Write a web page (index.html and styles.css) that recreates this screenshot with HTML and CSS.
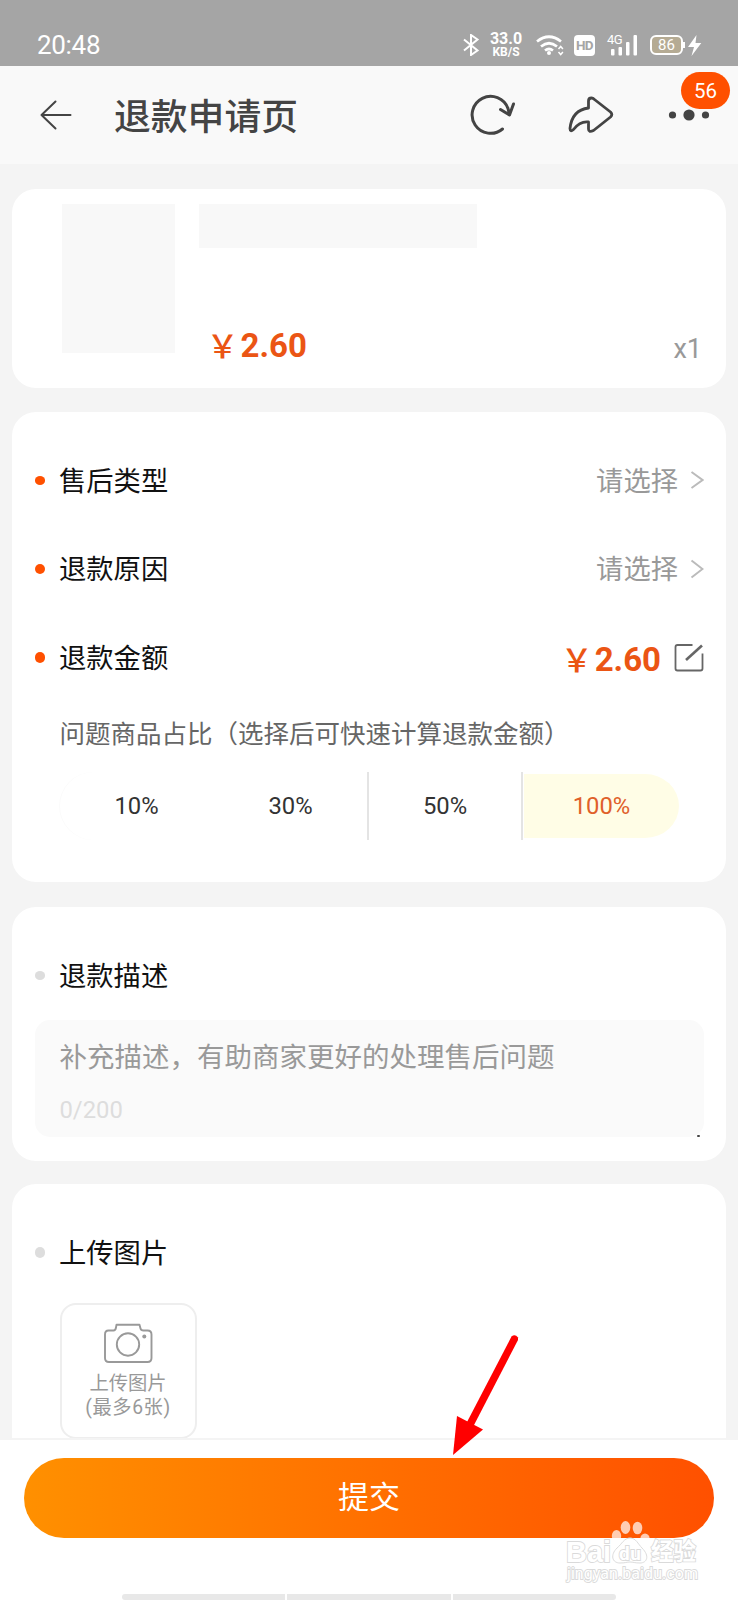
FILE: index.html
```html
<!DOCTYPE html>
<html lang="zh-CN">
<head>
<meta charset="utf-8">
<title>退款申请页</title>
<link rel="stylesheet" href="styles.css">
</head>
<body>
<div class="screen">
  <div class="status">
    <span class="clock">20:48</span>
    <div class="status-icons">
      <svg class="bt" width="17" height="22" viewBox="463 34 17 22" fill="none" stroke="#fff" stroke-width="2"><path d="M464 39.500l13.500 11-6.500 4.500v-20l6.500 4.500L464 50.500"/></svg>
      <div class="speed"><b>33.0</b><i>KB/S</i></div>
      <svg class="wifi" width="28" height="22" viewBox="536 34 28 22" fill="none" stroke="#fff" stroke-width="2.700"><path d="M537 41.500q12-9.500 24 0M541 46.500q8-6.500 16 0M545 50.500q4-3 8 0"/><circle cx="549" cy="53" r="2" fill="#fff" stroke="none"/><path d="M558.500 49l2.200-2.500 2.200 2.500M558.500 52l2.200 2.500 2.200-2.500" stroke-width="1.500"/></svg>
      <span class="hd">HD</span>
      <div class="signal"><span>4G</span><svg width="31" height="22" viewBox="607 34 31 22" fill="#fff"><rect x="611" y="49" width="3.500" height="6.500" rx="1"/><rect x="618.500" y="47" width="3.500" height="8.500" rx="1"/><rect x="626" y="42" width="3.500" height="13.500" rx="1"/><rect x="633.500" y="35" width="3.500" height="20.500" rx="1"/></svg></div>
      <span class="battery">86</span>
      <svg class="bolt" width="14" height="22" viewBox="688 34 14 22" fill="#fff"><path d="M696.500 35l-8.500 12h6l-2.500 9 9.800-13h-5.800z"/></svg>
    </div>
  </div>

  <header class="nav">
    <svg class="back" width="32" height="30" viewBox="40 100 32 30" fill="none" stroke="#444" stroke-width="2" stroke-linecap="round" stroke-linejoin="round"><path d="M70.500 115H41.500M55.500 101.500L41.500 115l14 13.500"/></svg>
    <h1>退款申请页</h1>
    <svg class="reload" width="46" height="44" viewBox="469 93 46 44" fill="none" stroke="#444" stroke-width="3" stroke-linecap="round" stroke-linejoin="round"><path d="M502.500 129A18.500 18.500 0 1 1 508 108.500L509.500 114.500M500.500 109.500L509.500 115l4-11"/></svg>
    <svg class="share" width="46" height="38" viewBox="568 96 46 38" fill="none" stroke="#444" stroke-width="2.800" stroke-linejoin="round" stroke-linecap="round"><path d="M588.500 108V101Q588.500 98 591.500 98Q593 98 594.500 99.500L610.500 112Q613 114.500 610.500 117L593.500 130.500Q588.500 133 588.500 129V122Q580 121 573.500 129.500Q570 132.500 570 128.500Q572 110 588.500 108Z"/></svg>
    <div class="more">
      <svg width="42" height="12" viewBox="668 109 42 12" fill="#444"><circle cx="672.500" cy="115" r="3.600"/><circle cx="689" cy="115" r="5.600"/><circle cx="705.500" cy="115" r="3.600"/></svg>
      <span class="badge">56</span>
    </div>
  </header>

  <main class="content">
    <section class="card goods">
      <div class="thumb"></div>
      <div class="goods-info">
        <div class="goods-name"></div>
        <div class="price"><span class="yen">￥</span>2.60</div>
      </div>
      <span class="qty">x1</span>
    </section>

    <section class="card form">
      <div class="row"><i class="dot flat"></i><span class="label">售后类型</span><span class="pick">请选择</span><svg class="chev" width="14" height="20" viewBox="0 0 14 20"><path d="M1.500 2l11 8-11 8"/></svg></div>
      <div class="row"><i class="dot"></i><span class="label">退款原因</span><span class="pick">请选择</span><svg class="chev" width="14" height="20" viewBox="0 0 14 20"><path d="M1.500 1.500L12.500 10l-11 8.500"/></svg></div>
      <div class="row"><i class="dot"></i><span class="label">退款金额</span><div class="price"><span class="yen">￥</span>2.60</div><svg class="edit" width="30" height="30" viewBox="674.500 643 30 30"><path d="M693 645H678Q676 645 676 647V668.500Q676 670.500 678 670.500H701Q703 670.500 703 668.500V653.500"/><path d="M686.500 660L702.500 645.500" stroke-width="2.600"/></svg></div>
      <p class="hint">问题商品占比（选择后可快速计算退款金额）</p>
      <div class="ratios"><span>10%</span><span>30%</span><span class="line">50%</span><span class="line on">100%</span></div>
    </section>

    <section class="card desc">
      <div class="row"><i class="dot gray flat"></i><span class="label">退款描述</span></div>
      <div class="area"><p>补充描述，有助商家更好的处理售后问题</p><small>0/200</small><i class="grip"></i></div>
    </section>

    <section class="card upload">
      <div class="row"><i class="dot gray"></i><span class="label">上传图片</span></div>
      <div class="uploader">
        <svg width="50" height="41" viewBox="102.500 1323.500 50 41" fill="none" stroke="#999" stroke-width="1.900" stroke-linejoin="round"><path d="M108 1331H113Q115 1331 115.500 1328L116 1325.200H139L140 1329Q140.500 1331 143 1331H147Q151 1331 151 1335V1358.500Q151 1362.500 147 1362.500H108.500Q104.500 1362.500 104.500 1358.500V1335Q104.500 1331 108 1331Z"/><circle cx="127.500" cy="1345" r="11.200"/><circle cx="143.800" cy="1337" r="2" fill="#999" stroke="none"/></svg>
        <span>上传图片</span>
        <span class="limit">(最多6张)</span>
      </div>
    </section>
  </main>

  <footer class="bottom">
    <button class="submit">提交</button>
    <div class="gesture"><i></i><i></i><i></i></div>
  </footer>

  <svg class="pointer" width="70" height="124" viewBox="450 1334 70 124"><path d="M511.500 1336.500Q515 1333.500 518 1337.500L518 1340L473.500 1426L466.500 1423Z" fill="#f00"/><path d="M453 1455L457 1416L483 1429.500Z" fill="#f00"/></svg>

  <svg class="watermark" width="136" height="68" viewBox="564 1519 136 68">
    <g fill="#fff" fill-opacity=".7"><ellipse cx="616.500" cy="1536" rx="4.700" ry="6"/><ellipse cx="625.500" cy="1527.500" rx="4.800" ry="6.500"/><ellipse cx="637.500" cy="1528" rx="4.800" ry="6.300"/><ellipse cx="645" cy="1539" rx="4.700" ry="5.500"/></g>
    <path d="M630 1538c6 0 8 6 12 10 8 8 5 15-2 15-5 0-7-1-10-1s-5 1-10 1c-8 0-10-8-3-15 5-4 7-10 13-10z" fill="#fff" fill-opacity=".85" stroke="#dcdcdc"/>
    <g class="wm-text">
      <text class="wm-brand" x="566" y="1562" textLength="45" lengthAdjust="spacingAndGlyphs">Bai</text>
      <text class="wm-du" x="619" y="1560" textLength="22">du</text>
      <text class="wm-cn" x="651" y="1560" textLength="45" lengthAdjust="spacingAndGlyphs">经验</text>
      <text class="wm-url" x="567" y="1579" textLength="131">jingyan.baidu.com</text>
    </g>
  </svg>
</div>
</body>
</html>
```
FILE: styles.css
```css
* { box-sizing: border-box; }

body {
  margin: 0;
  font-family: Roboto, "Noto Sans CJK SC", sans-serif;
  color: #111;
}

.screen {
  position: relative;
  width: 738px;
  height: 1600px;
  display: flex;
  flex-direction: column;
  overflow: hidden;
  background: #f4f4f4;
}

/* status bar */
.status {
  flex: none;
  height: 66px;
  padding: 24px 36px 0 37px;
  display: flex;
  justify-content: space-between;
  align-items: center;
  background: #a5a5a5;
  color: #fff;
}
.clock { font-size: 26px; letter-spacing: -0.3px; }
.status-icons { display: flex; align-items: center; }
.status-icons svg { display: block; flex: none; }
.speed {
  width: 34px;
  margin-left: 9px;
  display: flex;
  flex-direction: column;
  align-items: center;
}
.speed b { font-size: 16px; line-height: 14px; font-weight: 700; }
.speed i { font-size: 12px; line-height: 12px; font-style: normal; font-weight: 700; }
.wifi { margin-left: 13px; }
.hd {
  width: 21px;
  height: 21px;
  margin-left: 10px;
  border-radius: 4px;
  background: #fff;
  color: #a5a5a5;
  font-size: 13.500px;
  line-height: 21px;
  font-weight: 700;
  text-align: center;
  letter-spacing: -0.600px;
}
.signal { position: relative; margin-left: 12px; }
.signal span { position: absolute; left: 0; top: -1px; font-size: 13px; line-height: 13px; letter-spacing: -0.500px; }
.battery {
  position: relative;
  width: 33px;
  height: 20px;
  margin-left: 12px;
  border: 2px solid #fff;
  border-radius: 6px;
  background: #b5ab94;
  font-size: 15px;
  line-height: 16px;
  text-align: center;
}
.battery::after {
  content: "";
  position: absolute;
  right: -4px;
  top: 5px;
  width: 2px;
  height: 6px;
  background: #fff;
}
.bolt { margin-left: 5px; }

/* navigation */
.nav {
  flex: none;
  height: 98px;
  padding: 0 28px 0 40px;
  display: flex;
  align-items: center;
  background: #f9f9f9;
}
.nav h1 {
  flex: 1;
  margin: 0 0 0 42px;
  padding-top: 6px;
  font-size: 36.800px;
  line-height: 50px;
  font-weight: 500;
  color: #444;
}
.share { margin-left: 53px; }
.more { position: relative; display: flex; margin-left: 54px; }
.badge {
  position: absolute;
  left: 13px;
  top: -37px;
  width: 49px;
  height: 37px;
  border-radius: 19px;
  background: #ff5000;
  color: #fff;
  font-size: 20.500px;
  line-height: 38px;
  text-align: center;
}

/* cards */
.content {
  flex: 1;
  min-height: 0;
  padding: 25px 12px 0;
  overflow: hidden;
}
.card { background: #fff; border-radius: 24px; }
.goods {
  height: 199px;
  padding: 14.500px 24px 0 50px;
  display: flex;
}
.thumb { width: 112.500px; height: 149px; background: #f8f8f8; }
.goods-info { margin-left: 24px; flex: 1; }
.goods-name { width: 278.500px; height: 44.500px; margin-bottom: 78px; background: #f8f8f8; }
.goods-info .price { margin-left: 8px; }
.price {
  display: flex;
  align-items: center;
  font-size: 33px;
  line-height: 40px;
  font-weight: 700;
  color: #eb5514;
}
.yen {
  width: 34px;
  font-family: "Noto Sans CJK SC", sans-serif;
  font-size: 32px;
  line-height: 36px;
  padding-bottom: 4px;
  font-weight: 500;
}
.qty { margin-top: 125px; font-size: 27px; line-height: 40px; color: #999; }

.form { height: 470px; margin-top: 24px; padding-top: 24px; }
.row {
  height: 88.500px;
  padding: 0 22px 0 22.500px;
  display: flex;
  align-items: center;
}
.dot { flex: none; width: 10.500px; height: 10.500px; border-radius: 50%; background: #ff5000; }
.dot.flat { height: 8.500px; }
.dot.gray { background: #ddd; }
.label { flex: 1; margin-left: 14px; padding-top: 3px; font-size: 27.300px; line-height: 40px; }
.pick { margin-right: 12px; padding-top: 3px; font-size: 27.300px; line-height: 40px; color: #999; }
.chev { fill: none; stroke: #bbb; stroke-width: 2; }
.row .price { margin-right: 13px; padding-top: 5px; }
.edit { margin-top: 2px; fill: none; stroke: #666; stroke-width: 1.800; }
.hint {
  margin: 14px 0 0 47.500px;
  font-size: 25.500px;
  line-height: 36px;
  color: #666;
}
.ratios {
  display: flex;
  width: 620px;
  height: 68px;
  margin: 20px 0 0 47px;
}
.ratios span {
  width: 154px;
  padding-left: 1px;
  line-height: 68px;
  font-size: 23.800px;
  text-align: center;
  color: #333;
}
.ratios span:first-child { border-radius: 34px 0 0 34px; box-shadow: inset 1px 0 0 #fbfbfb; }
.ratios .line { padding-left: 0; border-left: 2px solid #e4e4e4; }
.ratios .on {
  width: 158px;
  color: #e0602a;
  background: #fffde6 content-box;
  padding: 2px 0 2px 1px;
  line-height: 64px;
  border-radius: 0 34px 34px 0;
}

.desc { height: 254px; margin-top: 25px; padding-top: 24px; }
.area {
  position: relative;
  height: 117px;
  margin: 0 22px 0 23px;
  padding: 18px 24.500px 0;
  border-radius: 15px;
  background: #fafafa;
}
.area p { margin: 0; font-size: 27.500px; line-height: 40px; color: #999; }
.area small { display: block; margin-top: 16px; font-size: 23.800px; line-height: 32px; color: #ddd; }
.grip {
  position: absolute;
  right: 4px;
  bottom: 0;
  width: 3px;
  height: 2px;
  border-radius: 1px;
  background: #444;
}

.upload { height: 300px; margin-top: 23px; padding-top: 24px; }
.uploader {
  width: 137px;
  height: 136px;
  margin: 6.500px 0 0 47.500px;
  border: 2px solid #eee;
  border-radius: 16px;
  padding-top: 18px;
  display: flex;
  flex-direction: column;
  align-items: center;
  color: #999;
  font-size: 19.300px;
  line-height: 23.500px;
}
.uploader svg { flex: none; margin: 0 0 8px; }
.limit { letter-spacing: 0.600px; }

/* footer */
.bottom {
  flex: none;
  height: 162px;
  padding: 18px 24px 0;
  border-top: 2px solid #f4f4f4;
  background: #fff;
}
.submit {
  display: block;
  width: 690px;
  height: 80px;
  border: 0;
  border-radius: 40px;
  background: linear-gradient(90deg, #ff9000, #ff5000);
  color: #fff;
  font-family: inherit;
  font-size: 31px;
  line-height: 78px;
  padding: 0;
}
.gesture {
  display: flex;
  gap: 2px;
  width: 494px;
  height: 6px;
  margin: 56px 0 0 98px;
  border-radius: 3px;
  overflow: hidden;
}
.gesture i { flex: 1; background: #e8e8e8; }

/* overlays */
.pointer { position: absolute; left: 450px; top: 1334px; }
.watermark { position: absolute; left: 564px; top: 1519px; }
.wm-text {
  fill: #fff;
  stroke: #dadada;
  stroke-width: 1.800px;
  paint-order: stroke;
  font-weight: 700;
}
.wm-brand { font-size: 30px; font-family: "Liberation Sans", sans-serif; }
.wm-du { font-size: 19px; }
.wm-cn { font-size: 24px; }
.wm-url { font-size: 16px; font-weight: 400; }
```
